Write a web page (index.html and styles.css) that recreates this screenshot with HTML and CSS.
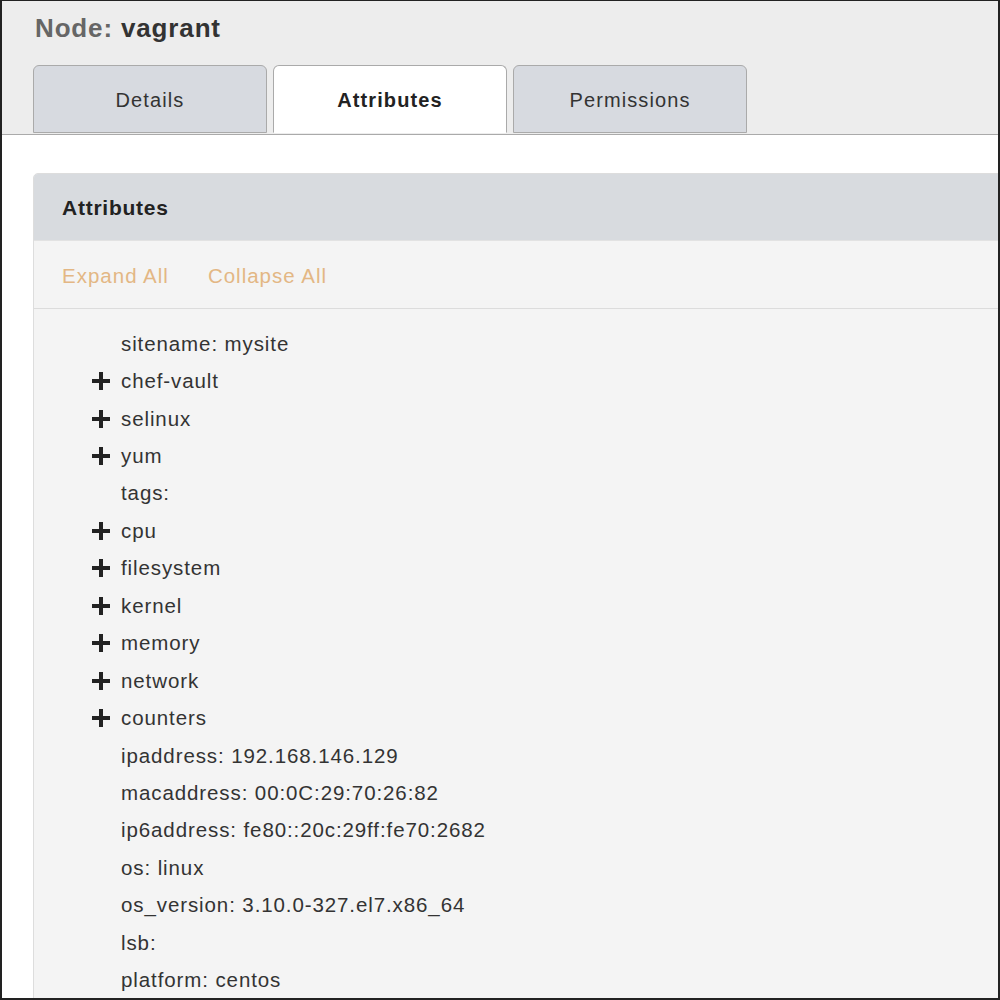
FILE: index.html
```html
<!DOCTYPE html>
<html>
<head>
<meta charset="utf-8">
<link rel="stylesheet" href="styles.css">
</head>
<body>
<div class="frame">
  <header class="top">
    <h1 class="title"><span class="label">Node:</span> vagrant</h1>
    <nav class="tabs">
      <div class="tab">Details</div>
      <div class="tab active">Attributes</div>
      <div class="tab">Permissions</div>
    </nav>
  </header>
  <main class="content">
    <section class="panel">
      <div class="panel-head">Attributes</div>
      <div class="toolbar">
        <a class="link">Expand All</a>
        <a class="link">Collapse All</a>
      </div>
      <ul class="tree">
        <li class="row"><span class="toggle"></span>sitename: mysite</li>
        <li class="row"><span class="toggle"><svg viewBox="0 0 18 18"><path d="M7 0h4v7h7v4h-7v7h-4v-7h-7v-4h7z"/></svg></span>chef-vault</li>
        <li class="row"><span class="toggle"><svg viewBox="0 0 18 18"><path d="M7 0h4v7h7v4h-7v7h-4v-7h-7v-4h7z"/></svg></span>selinux</li>
        <li class="row"><span class="toggle"><svg viewBox="0 0 18 18"><path d="M7 0h4v7h7v4h-7v7h-4v-7h-7v-4h7z"/></svg></span>yum</li>
        <li class="row"><span class="toggle"></span>tags:</li>
        <li class="row"><span class="toggle"><svg viewBox="0 0 18 18"><path d="M7 0h4v7h7v4h-7v7h-4v-7h-7v-4h7z"/></svg></span>cpu</li>
        <li class="row"><span class="toggle"><svg viewBox="0 0 18 18"><path d="M7 0h4v7h7v4h-7v7h-4v-7h-7v-4h7z"/></svg></span>filesystem</li>
        <li class="row"><span class="toggle"><svg viewBox="0 0 18 18"><path d="M7 0h4v7h7v4h-7v7h-4v-7h-7v-4h7z"/></svg></span>kernel</li>
        <li class="row"><span class="toggle"><svg viewBox="0 0 18 18"><path d="M7 0h4v7h7v4h-7v7h-4v-7h-7v-4h7z"/></svg></span>memory</li>
        <li class="row"><span class="toggle"><svg viewBox="0 0 18 18"><path d="M7 0h4v7h7v4h-7v7h-4v-7h-7v-4h7z"/></svg></span>network</li>
        <li class="row"><span class="toggle"><svg viewBox="0 0 18 18"><path d="M7 0h4v7h7v4h-7v7h-4v-7h-7v-4h7z"/></svg></span>counters</li>
        <li class="row"><span class="toggle"></span>ipaddress: 192.168.146.129</li>
        <li class="row"><span class="toggle"></span>macaddress: 00:0C:29:70:26:82</li>
        <li class="row"><span class="toggle"></span>ip6address: fe80::20c:29ff:fe70:2682</li>
        <li class="row"><span class="toggle"></span>os: linux</li>
        <li class="row"><span class="toggle"></span>os_version: 3.10.0-327.el7.x86_64</li>
        <li class="row"><span class="toggle"></span>lsb:</li>
        <li class="row"><span class="toggle"></span>platform: centos</li>
      </ul>
    </section>
  </main>
</div>
</body>
</html>
```
FILE: styles.css
```css
* { box-sizing: border-box; }
html, body { margin: 0; padding: 0; }
body {
  font-family: "Liberation Sans", Arial, sans-serif;
  color: #333;
  background: #fff;
}
.frame {
  width: 1000px;
  height: 1000px;
  border: 2px solid #222;
  border-top-width: 1px;
  overflow: hidden;
  background: #fff;
}
.top {
  background: #ededed;
  border-bottom: 1px solid #aaa;
  height: 134px;
  padding-left: 31px;
  display: flex;
  flex-direction: column;
}
.title {
  margin: 0;
  padding: 12px 0 0 2px;
  height: 64px;
  font-size: 26px;
  font-weight: bold;
  color: #333;
  line-height: 30px;
  letter-spacing: 0.85px;
}
.title .label { color: #666; }
.tabs {
  display: flex;
  gap: 6px;
  margin-bottom: -1px;
}
.tab {
  width: 234px;
  height: 68px;
  border: 1px solid #aaa;
  border-radius: 6px 6px 0 0;
  background: #d7dae0;
  font-size: 20px;
  letter-spacing: 1.1px;
  color: #333;
  display: flex;
  align-items: center;
  justify-content: center;
  padding-top: 2px;
}
.tab.active {
  background: #fff;
  border-bottom-color: #fff;
  font-weight: bold;
  color: #222;
}
.content {
  padding: 38px 0 0 31px;
}
.panel {
  width: 1000px;
  border: 1px solid #ddd;
  border-radius: 5px 0 0 0;
  background: #f4f4f4;
}
.panel-head {
  height: 67px;
  background: #d8dbdf;
  border-bottom: 1px solid #e2e2e2;
  border-radius: 4px 0 0 0;
  display: flex;
  align-items: center;
  padding-left: 28px;
  padding-top: 1px;
  font-size: 21px;
  letter-spacing: 0.75px;
  font-weight: bold;
  color: #222;
}
.toolbar {
  height: 68px;
  border-bottom: 1px solid #dcdcdc;
  display: flex;
  align-items: center;
  gap: 39px;
  padding-left: 28px;
  padding-top: 2px;
}
.link {
  color: #e3b784;
  font-size: 20.5px;
  letter-spacing: 1px;
  cursor: pointer;
}
.tree {
  list-style: none;
  margin: 0;
  padding: 16px 0 0 58px;
}
.row {
  display: flex;
  align-items: center;
  height: 37.45px;
  font-size: 20.5px;
  letter-spacing: 0.9px;
  color: #333;
}
.toggle {
  width: 29px;
  flex: none;
  display: flex;
  align-items: center;
}
.toggle svg {
  width: 18px;
  height: 18px;
  fill: #222;
}
```
